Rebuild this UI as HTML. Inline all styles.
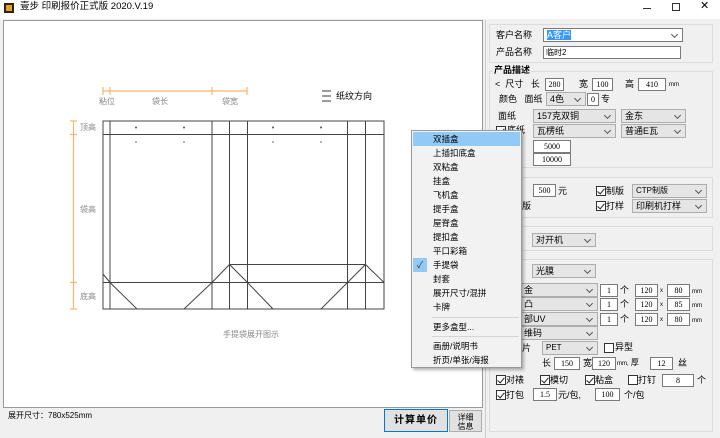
<!DOCTYPE html>
<html><head><meta charset="utf-8"><style>
*{margin:0;padding:0;box-sizing:border-box}
body{width:720px;height:438px;background:#f0f0f0;position:relative;overflow:hidden;font-family:"Liberation Sans","Noto Sans CJK SC",sans-serif;font-size:9px;color:#000}
.a{position:absolute;white-space:nowrap;line-height:12px}
.in{position:absolute;background:#fff;border:1px solid #7a7a7a;height:13px;font-size:8px;line-height:11px;text-align:center;font-family:"Liberation Serif","Noto Sans CJK SC",serif}
.cb{position:absolute;background:#e5e5e5;border:1px solid #adadad;height:14px;font-size:9px;line-height:12px;padding-left:3px}
.cb:after{content:"";position:absolute;right:5px;top:3px;width:4px;height:4px;border-right:1px solid #555;border-bottom:1px solid #555;transform:rotate(45deg)}
.ck{position:absolute;width:10px;height:10px;border:1px solid #333;background:#fff}
.ck.on:after{content:"";position:absolute;left:2px;top:0px;width:3px;height:6px;border-right:1px solid #222;border-bottom:1px solid #222;transform:rotate(40deg)}
.grp{position:absolute;border:1px solid #dcdcdc}
.mi{position:absolute;left:21px;font-size:8.5px;line-height:12px}
.o{position:absolute;background:#f9b36a}
.g{color:#888;font-size:8px}
</style></head><body>
<div class="a" style="left:0;top:0;width:720px;height:19px;background:#fff"></div>
<div class="a" style="left:4px;top:3px;width:10px;height:10px;background:#2a2218"><div style="position:absolute;left:2px;top:2px;width:6px;height:6px;background:#e8a020"></div></div>
<div class="a" style="left:20px;top:1px;font-size:9.5px">壹步 印刷报价正式版 2020.V.19</div>
<div class="a" style="left:643px;top:8px;width:8px;height:1px;background:#333"></div>
<div class="a" style="left:672px;top:3px;width:8px;height:8px;border:1px solid #333"></div>
<div class="a" style="left:700px;top:0px;font-size:11px">✕</div>

<div class="a" style="left:3px;top:20px;width:480px;height:388px;background:#fff;border:1px solid #999"></div>
<svg class="a" style="left:0;top:0" width="485" height="410">
<g stroke="#f9b36a" stroke-width="1.2">
<line x1="103" y1="91" x2="247" y2="91"/>
<line x1="103" y1="87" x2="103" y2="95"/><line x1="110" y1="87" x2="110" y2="95"/><line x1="212" y1="87" x2="212" y2="95"/><line x1="247" y1="87" x2="247" y2="95"/>
<line x1="73.5" y1="121" x2="73.5" y2="309"/>
<line x1="70" y1="121" x2="77" y2="121"/><line x1="70" y1="134.5" x2="77" y2="134.5"/><line x1="70" y1="282.5" x2="77" y2="282.5"/><line x1="70" y1="309" x2="77" y2="309"/>
</g>
<g stroke="#666" stroke-width="1.3">
<line x1="322" y1="91" x2="331" y2="91"/><line x1="322" y1="96" x2="331" y2="96"/><line x1="322" y1="101" x2="331" y2="101"/>
</g>
<g stroke="#444" stroke-width="1" fill="none">
<rect x="103" y="121" width="281" height="188"/>
<line x1="103" y1="134.5" x2="384" y2="134.5"/>
<line x1="103" y1="282.5" x2="384" y2="282.5"/>
<line x1="110" y1="121" x2="110" y2="309"/>
<line x1="212" y1="121" x2="212" y2="309"/>
<line x1="229.5" y1="121" x2="229.5" y2="309"/>
<line x1="247.5" y1="121" x2="247.5" y2="309"/>
<line x1="347.5" y1="121" x2="347.5" y2="309"/>
<line x1="365.5" y1="121" x2="365.5" y2="309"/>
<line x1="229.5" y1="264.5" x2="365.5" y2="264.5"/>
<polyline points="103,274 110,282.5 137,309"/>
<polyline points="184,309 212,282.5 229.5,264.5 247.5,282.5 273,309"/>
<polyline points="321,309 347.5,282.5 365.5,264.5 384,282.5"/>
</g>
<g fill="#555"><circle cx="136" cy="127.5" r="1"/><circle cx="184" cy="127.5" r="1"/><circle cx="273" cy="127.5" r="1"/><circle cx="321" cy="127.5" r="1"/>
<circle cx="136" cy="142" r=".8"/><circle cx="184" cy="142" r=".8"/><circle cx="273" cy="142" r=".8"/><circle cx="321" cy="142" r=".8"/></g>
</svg>
<div class="a g" style="left:99px;top:96px">粘位</div>
<div class="a g" style="left:152px;top:96px">袋长</div>
<div class="a g" style="left:222px;top:96px">袋宽</div>
<div class="a" style="left:336px;top:90px;font-size:9px">纸纹方向</div>
<div class="a g" style="left:80px;top:122px">顶高</div>
<div class="a g" style="left:80px;top:204px">袋高</div>
<div class="a g" style="left:80px;top:291px">底高</div>
<div class="a g" style="left:223px;top:329px">手提袋展开图示</div>
<div class="a" style="left:8px;top:410px;font-size:8px">展开尺寸：780x525mm</div>
<div class="a" style="left:384px;top:409px;width:64px;height:23px;background:#e1e1e1;border:1px solid #0078d7;font-size:10px;font-weight:bold;text-align:center;line-height:21px;letter-spacing:1px">计算单价</div>
<div class="a" style="left:449px;top:410px;width:33px;height:22px;background:#e1e1e1;border:1px solid #adadad;font-size:8px;text-align:center;line-height:9px;padding-top:2px;white-space:normal">详细<br>信息</div>

<!-- right panel -->
<div class="a" style="left:485px;top:20px;width:1px;height:418px;background:#ccc"></div>
<div class="grp" style="left:489px;top:24px;width:224px;height:39px"></div>
<div class="a" style="left:496px;top:29px">客户名称</div>
<div class="cb" style="left:543px;top:28px;width:140px;background:#fff;border-color:#7a7a7a"><span style="background:#3399ff;color:#fff">A客户</span></div>
<div class="a" style="left:496px;top:46px">产品名称</div>
<div class="in" style="left:543px;top:46px;width:138px;text-align:left;padding-left:2px;font-family:'Liberation Sans','Noto Sans CJK SC',sans-serif">临时2</div>

<div class="grp" style="left:489px;top:71px;width:224px;height:97px"></div>
<div class="a" style="left:493px;top:64px;background:#f0f0f0;font-weight:bold;padding:0 1px">产品描述</div>
<div class="a" style="left:495px;top:78px">&lt;&nbsp;&nbsp;尺寸&nbsp;&nbsp;&nbsp;长</div>
<div class="in" style="left:545px;top:78px;width:19px">280</div>
<div class="a" style="left:579px;top:78px">宽</div>
<div class="in" style="left:592px;top:78px;width:21px">100</div>
<div class="a" style="left:625px;top:78px">高</div>
<div class="in" style="left:638px;top:78px;width:28px">410</div>
<div class="a" style="left:669px;top:79px;font-size:6px">mm</div>
<div class="a" style="left:499px;top:93px">颜色&nbsp;&nbsp;&nbsp;面纸</div>
<div class="cb" style="left:546px;top:92px;width:40px">4色</div>
<div class="in" style="left:587px;top:93px;width:12px">0</div>
<div class="a" style="left:601px;top:93px">专</div>
<div class="a" style="left:498px;top:110px">面纸</div>
<div class="cb" style="left:533px;top:109px;width:83px">157克双铜</div>
<div class="cb" style="left:621px;top:109px;width:65px">金东</div>
<div class="ck on" style="left:496px;top:126px"></div>
<div class="a" style="left:507px;top:124px">底纸</div>
<div class="cb" style="left:533px;top:124px;width:83px">瓦楞纸</div>
<div class="cb" style="left:621px;top:124px;width:65px">普通E瓦</div>
<div class="in" style="left:533px;top:140px;width:38px">5000</div>
<div class="in" style="left:533px;top:153px;width:38px">10000</div>

<div class="grp" style="left:489px;top:177px;width:224px;height:41px"></div>
<div class="in" style="left:533px;top:184px;width:23px">500</div>
<div class="a" style="left:558px;top:185px">元</div>
<div class="ck on" style="left:596px;top:186px"></div><div class="a" style="left:606px;top:185px">制版</div>
<div class="cb" style="left:632px;top:184px;width:75px;font-size:8px">CTP制版</div>
<div class="a" style="left:522px;top:200px">版</div>
<div class="ck on" style="left:596px;top:201px"></div><div class="a" style="left:606px;top:200px">打样</div>
<div class="cb" style="left:632px;top:199px;width:75px">印刷机打样</div>

<div class="grp" style="left:489px;top:226px;width:224px;height:25px"></div>
<div class="cb" style="left:532px;top:233px;width:64px">对开机</div>

<div class="grp" style="left:489px;top:259px;width:224px;height:173px"></div>
<div class="cb" style="left:532px;top:264px;width:64px">光膜</div>
<div class="cb" style="left:520px;top:283px;width:78px">金</div>
<div class="cb" style="left:520px;top:297px;width:78px">凸</div>
<div class="cb" style="left:520px;top:312px;width:78px">部UV</div>
<div class="cb" style="left:520px;top:326px;width:78px">维码</div>
<div class="in" style="left:600px;top:284px;width:18px">1</div><div class="a" style="left:620px;top:284px">个</div>
<div class="in" style="left:635px;top:284px;width:23px">120</div><div class="a" style="left:660px;top:285px;font-size:6px">x</div>
<div class="in" style="left:667px;top:284px;width:23px">80</div><div class="a" style="left:692px;top:286px;font-size:6px">mm</div>
<div class="in" style="left:600px;top:298px;width:18px">1</div><div class="a" style="left:620px;top:298px">个</div>
<div class="in" style="left:635px;top:298px;width:23px">120</div><div class="a" style="left:660px;top:299px;font-size:6px">x</div>
<div class="in" style="left:667px;top:298px;width:23px">85</div><div class="a" style="left:692px;top:300px;font-size:6px">mm</div>
<div class="in" style="left:600px;top:313px;width:18px">1</div><div class="a" style="left:620px;top:313px">个</div>
<div class="in" style="left:635px;top:313px;width:23px">120</div><div class="a" style="left:660px;top:314px;font-size:6px">x</div>
<div class="in" style="left:667px;top:313px;width:23px">80</div><div class="a" style="left:692px;top:315px;font-size:6px">mm</div>
<div class="a" style="left:522px;top:342px">片</div>
<div class="cb" style="left:542px;top:341px;width:56px;font-size:8px">PET</div>
<div class="ck" style="left:604px;top:343px"></div><div class="a" style="left:615px;top:341px">异型</div>
<div class="a" style="left:542px;top:357px">长</div>
<div class="in" style="left:554px;top:357px;width:26px">150</div>
<div class="a" style="left:583px;top:357px">宽</div>
<div class="in" style="left:592px;top:357px;width:24px">120</div>
<div class="a" style="left:617px;top:357px;font-size:8px"><span style="font-size:6px">mm,</span> 厚</div>
<div class="in" style="left:650px;top:357px;width:23px">12</div>
<div class="a" style="left:678px;top:357px">丝</div>
<div class="ck on" style="left:496px;top:375px"></div><div class="a" style="left:506px;top:374px">对裱</div>
<div class="ck on" style="left:540px;top:375px"></div><div class="a" style="left:550px;top:374px">模切</div>
<div class="ck on" style="left:585px;top:375px"></div><div class="a" style="left:595px;top:374px">粘盒</div>
<div class="ck" style="left:628px;top:375px"></div><div class="a" style="left:638px;top:374px">打钉</div>
<div class="in" style="left:662px;top:374px;width:32px">8</div><div class="a" style="left:697px;top:374px">个</div>
<div class="ck on" style="left:496px;top:390px"></div><div class="a" style="left:506px;top:389px">打包</div>
<div class="in" style="left:533px;top:388px;width:24px">1.5</div>
<div class="a" style="left:558px;top:389px">元/包,</div>
<div class="in" style="left:595px;top:388px;width:25px">100</div>
<div class="a" style="left:624px;top:389px">个/包</div>

<!-- menu -->
<div class="a" style="left:411px;top:130px;width:111px;height:238px;background:#f2f2f2;border:1px solid #999;box-shadow:2px 2px 3px rgba(0,0,0,.3)">
<div style="position:absolute;left:1px;top:1px;width:107px;height:14px;background:#91c9f7"></div>
<div style="position:absolute;left:1px;top:127px;width:14px;height:14px;background:#91c9f7;text-align:center;line-height:14px;font-size:9px;color:#333">✓</div>
<div class="mi" style="top:2px">双插盒</div>
<div class="mi" style="top:16px">上插扣底盒</div>
<div class="mi" style="top:30px">双粘盒</div>
<div class="mi" style="top:44px">挂盒</div>
<div class="mi" style="top:58px">飞机盒</div>
<div class="mi" style="top:72px">提手盒</div>
<div class="mi" style="top:86px">屋脊盒</div>
<div class="mi" style="top:100px">提扣盒</div>
<div class="mi" style="top:114px">平口彩箱</div>
<div class="mi" style="top:128px">手提袋</div>
<div class="mi" style="top:142px">封套</div>
<div class="mi" style="top:156px">展开尺寸/混拼</div>
<div class="mi" style="top:170px">卡牌</div>
<div style="position:absolute;left:20px;top:186px;width:87px;height:1px;background:#d5d5d5"></div>
<div class="mi" style="top:190px">更多盒型...</div>
<div style="position:absolute;left:20px;top:205px;width:87px;height:1px;background:#d5d5d5"></div>
<div class="mi" style="top:209px">画册/说明书</div>
<div class="mi" style="top:223px">折页/单张/海报</div>
</div>
</body></html>
